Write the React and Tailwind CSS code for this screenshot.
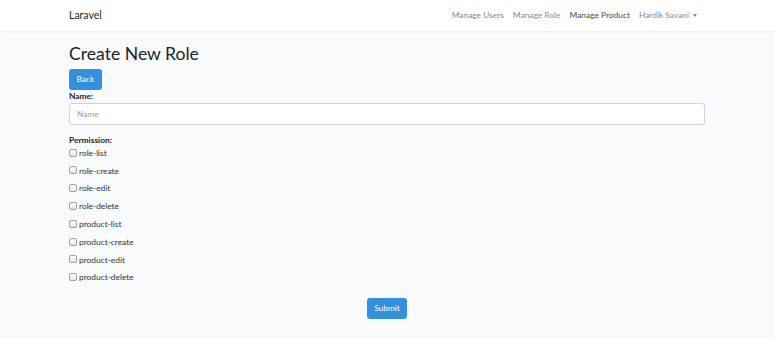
const NAV_LINKS = [
  { label: 'Manage Users', active: false },
  { label: 'Manage Role', active: false },
  { label: 'Manage Product', active: true },
]

const PERMISSIONS = [
  'role-list',
  'role-create',
  'role-edit',
  'role-delete',
  'product-list',
  'product-create',
  'product-edit',
  'product-delete',
]

const FONT = { fontFamily: 'Lato, "Open Sans", "Liberation Sans", sans-serif' }

const Checkbox = () => (
  <span className="inline-block w-[8px] h-[8px] rounded-[2px] border border-[#a0a0a0] bg-gradient-to-b from-white to-[#e6e6e6] mr-[2px] -translate-y-[1px]" />
)

const App = () => {
  return (
    <div className="min-h-[338px] bg-[#f8fafc] text-[#212529] text-[8.4px] leading-[1.6]" style={FONT}>
      {/* Navbar */}
      <nav className="bg-white h-[31px] shadow-[0_1px_3px_rgba(0,0,0,0.06)]">
        <div className="w-[636px] mx-auto h-full flex items-center justify-between">
          <a className="text-[10.5px] text-[#212529]">Laravel</a>
          <ul className="flex items-center gap-[9px]">
            {NAV_LINKS.map((l) => (
              <li key={l.label} className={l.active ? 'text-[#4a4a4a]' : 'text-[#8a8a8a]'}>{l.label}</li>
            ))}
            <li className="flex items-center text-[#8a8a8a] mr-[8px]">
              Hardik Savani
              <span className="ml-[4px] w-0 h-0 border-l-[2.5px] border-r-[2.5px] border-t-[3px] border-l-transparent border-r-transparent border-t-[#8a8a8a]" />
            </li>
          </ul>
        </div>
      </nav>

      <main className="w-[636px] mx-auto pt-[12px]">
        <h2 className="text-[17.6px] leading-[1.2] mb-[5px]">Create New Role</h2>
        <button className="h-[21px] px-[7.5px] rounded-[3px] bg-[#3490dc] text-white text-[8.4px]">Back</button>

        <form>
          <div className="font-bold leading-[13px]">Name:</div>
          <input
            placeholder="Name"
            className="w-full h-[22px] px-[7px] bg-white border border-[#ced4da] rounded-[3px] text-[8.4px] placeholder:text-[#9aa0a6] outline-none"
          />

          <div className="font-bold mt-[9px] leading-[13px]">Permission:</div>
          <div className="flex flex-col">
            {PERMISSIONS.map((p) => (
              <label key={p} className="flex items-center h-[13px] mb-[4.8px] text-[#333]">
                <Checkbox />
                {p}
              </label>
            ))}
          </div>

          <div className="flex justify-center mt-[9px]">
            <button type="button" className="h-[21px] px-[7.5px] rounded-[3px] bg-[#3490dc] text-white text-[8.4px]">Submit</button>
          </div>
        </form>
      </main>
    </div>
  )
}

export default App
